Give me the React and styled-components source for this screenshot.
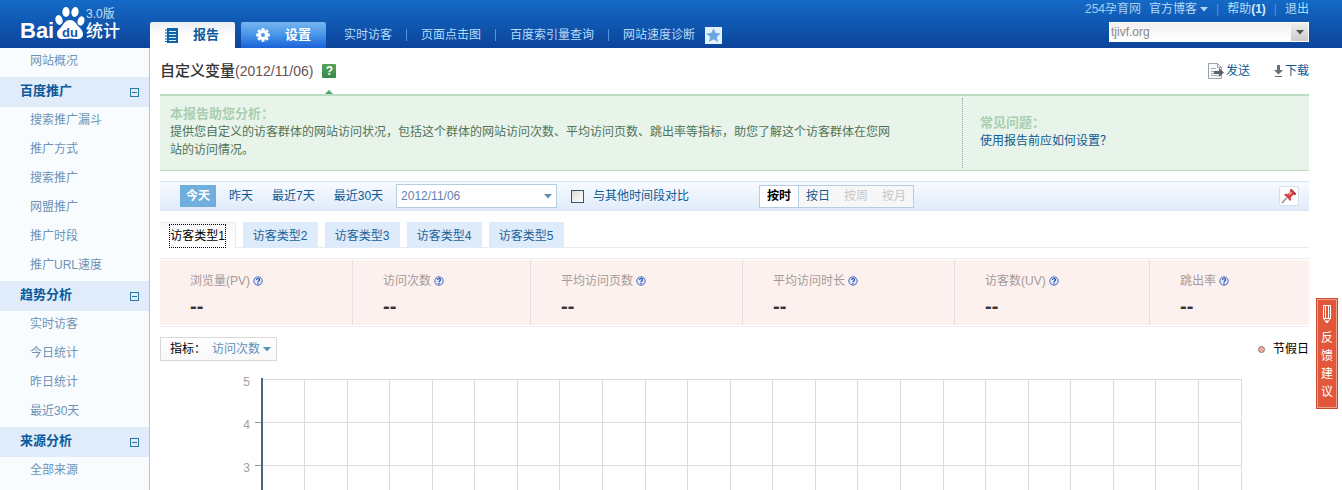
import { useState } from 'react';
import styled, { createGlobalStyle } from 'styled-components';

const menu = [
  {
    title: '百度推广',
    items: ['搜索推广漏斗', '推广方式', '搜索推广', '网盟推广', '推广时段', '推广URL速度'],
  },
  { title: '趋势分析', items: ['实时访客', '今日统计', '昨日统计', '最近30天'] },
  { title: '来源分析', items: ['全部来源'] },
];

const quickLinks = ['实时访客', '页面点击图', '百度索引量查询', '网站速度诊断'];
const ranges = ['今天', '昨天', '最近7天', '最近30天'];
const visitorTypes = ['访客类型1', '访客类型2', '访客类型3', '访客类型4', '访客类型5'];

const units = [
  { label: '按时' },
  { label: '按日' },
  { label: '按周', disabled: true },
  { label: '按月', disabled: true },
];

const metrics = [
  { label: '浏览量(PV)', size: 193 },
  { label: '访问次数', size: 178 },
  { label: '平均访问页数', size: 212 },
  { label: '平均访问时长', size: 212 },
  { label: '访客数(UV)', size: 195 },
  { label: '跳出率', size: 159 },
];

const metricsTotal = metrics.reduce((sum, { size }) => sum + size, 0);

const HOURS = 23;
const ROW_HEIGHT = 43;
const chartLabels = [5, 4, 3, 2, 1, 0];

function Logo() {
  return (
    <svg width="108" height="44" overflow="visible" role="img" aria-label="百度统计 3.0版">
      <g fill="#fff">
        <text x="4" y="38" fontSize="22" fontWeight="bold">
          Bai
        </text>
        <ellipse cx="43" cy="20" rx="3.6" ry="5" transform="rotate(-14 43 20)" />
        <ellipse cx="50" cy="12" rx="3.6" ry="5" />
        <ellipse cx="59" cy="12" rx="3.6" ry="5" transform="rotate(8 59 12)" />
        <ellipse cx="65" cy="21" rx="3.4" ry="4.8" transform="rotate(18 65 21)" />
        <path d="M54 20c4 0 6 3 8 6 3 3 5 5 5 8 0 4-3 5-6 5-3 0-5-.6-7-.6s-4 .6-7 .6c-4 0-6-2-6-5 0-4 3-5 5-8 2-3 4-6 8-6z" />
        <text x="70" y="18" fontSize="12" fillOpacity="0.8">
          3.0版
        </text>
        <text x="70" y="37" fontSize="17" fontWeight="500">
          统计
        </text>
      </g>
      <text x="46" y="37" fontSize="13" fontWeight="bold" fill="#1055ab">
        du
      </text>
    </svg>
  );
}

function ReportIcon() {
  return (
    <svg width="13" height="15" aria-hidden="true">
      <rect x="2" y="0" width="11" height="15" fill="#0d62a8" />
      <path d="M0 2h3M0 5h3M0 8h3M0 11h3M0 13.500h3" stroke="#0d62a8" />
      <path d="M4 3.500h7M4 6.500h7M4 9.500h7M4 12.500h7" stroke="#d9ecfa" />
    </svg>
  );
}

function GearIcon() {
  return (
    <svg width="14" height="14" viewBox="-7 -7 14 14" aria-hidden="true">
      <g fill="#fff">
        {[0, 45, 90, 135].map((angle) => (
          <rect key={angle} x="-1.500" y="-6.800" width="3" height="13.600" transform={`rotate(${angle})`} />
        ))}
      </g>
      <circle r="3.600" fill="none" stroke="#fff" strokeWidth="2.800" />
      <circle r="2" fill="#4a97ea" />
    </svg>
  );
}

function StarIcon() {
  return (
    <svg width="17" height="17" aria-hidden="true">
      <rect width="17" height="17" fill="#e2f0fc" />
      <path d="M8.500 1.500l2.100 4.600 5 .5-3.800 3.300 1.200 5-4.500-2.700-4.500 2.700 1.200-5L1.400 6.600l5-.5z" fill="#6ba6e0" />
    </svg>
  );
}

function Caret({ color }) {
  return (
    <svg width="8" height="5" aria-hidden="true">
      <path d="M0 0h8L4 4.500z" fill={color} />
    </svg>
  );
}

function SendIcon() {
  return (
    <svg width="16" height="16" aria-hidden="true">
      <path d="M.5.500h9l4 4v11H.5z" fill="#f7f8f9" stroke="#9aa3aa" />
      <path d="M9.500.500v4h4" fill="none" stroke="#9aa3aa" />
      <path d="M3 5.500h5M3 12.500h8" stroke="#a9b1b7" />
      <path d="M3 8.500h4M3 10.500h4" stroke="#a9b1b7" />
      <path d="M6 8h5V5l5 4.500-5 4.500v-3H6z" fill="#5a6268" />
    </svg>
  );
}

function DownloadIcon() {
  return (
    <svg width="9" height="12" aria-hidden="true">
      <path d="M3 0h3v5h3L4.500 9.500 0 5h3z" fill="#66717a" />
      <path d="M1 11.500h7" stroke="#66717a" />
    </svg>
  );
}

function PinIcon() {
  return (
    <svg width="16" height="16" aria-hidden="true">
      <path d="M5.500 10L1 15" stroke="#8a9298" strokeWidth="1.500" />
      <path d="M3 6.500c1-1 2.500-1 3.500-.5l2.500-2c-.5-1 0-2 .8-2.800l5 5c-.8.800-1.800 1.200-2.800.8l-2.200 2.400c.5 1.200.4 2.600-.6 3.600z" fill="#d9454f" />
      <path d="M8 6.500l2.500-2.300" stroke="#f6a9ae" strokeWidth="1.500" />
      <path d="M9.800 1.200l5 5" stroke="#b02a38" strokeWidth="1.500" />
    </svg>
  );
}

function PencilIcon() {
  return (
    <svg width="8" height="19" fill="none" stroke="#fff" aria-hidden="true">
      <path d="M.5.500h7v13L4 18 .5 13.500zM.5 13.500h7M2.500.500v13M5.500.500v13" />
      <path d="M3 16h2l-1 2z" fill="#fff" />
    </svg>
  );
}

function HintIcon() {
  return (
    <svg width="10" height="10" aria-hidden="true">
      <circle cx="5" cy="5" r="4.200" fill="#dfe9fb" stroke="#4a68bd" />
      <path d="M3.500 4c0-2 3-2 3-.2C6.500 5 5 4.800 5 6.200M5 7v1.200" fill="none" stroke="#2d4aa5" strokeWidth="1.200" />
    </svg>
  );
}

function Chart() {
  return (
    <ChartArea>
      <ChartAxis>
        {chartLabels.map((label) => (
          <li key={label}>{label}</li>
        ))}
      </ChartAxis>
      <Plot aria-label="访问次数趋势">
        <svg x="8" y="5" width="100%" height="230" overflow="visible">
          {chartLabels.map((label, i) => (
            <g key={label}>
              <rect y={1 + i * ROW_HEIGHT} width="100%" height="1" fill="#dcdcdc" />
              {i > 0 && <rect x="-7" y={1 + i * ROW_HEIGHT} width="7" height="1" fill="#8a9ba6" />}
            </g>
          ))}
          {Array.from({ length: HOURS }, (_, i) => (
            <line
              key={i}
              x1={`${((i + 1) / HOURS) * 100}%`}
              x2={`${((i + 1) / HOURS) * 100}%`}
              y1="1"
              y2="216"
              stroke="#dcdcdc"
              shapeRendering="crispEdges"
            />
          ))}
          <rect x="-1" width="2" height="216" fill="#466a7d" />
        </svg>
      </Plot>
    </ChartArea>
  );
}

export default function App() {
  const [range, setRange] = useState('今天');
  const [unit, setUnit] = useState('按时');
  const [visitorType, setVisitorType] = useState('访客类型1');

  return (
    <Page>
      <GlobalStyle />
      <Header>
        <Brand href="#">
          <Logo />
        </Brand>
        <MainTabs>
          <MainTab href="#" $active>
            <ReportIcon />
            报告
          </MainTab>
          <MainTab href="#">
            <GearIcon />
            设置
          </MainTab>
        </MainTabs>
        <QuickNav>
          {quickLinks.map((link) => (
            <QuickLink href="#" key={link}>
              {link}
            </QuickLink>
          ))}
          <StarButton aria-label="收藏">
            <StarIcon />
          </StarButton>
        </QuickNav>
        <Account>
          <AccountLinks>
            <span>254孕育网</span>
            <a href="#">
              官方博客 <Caret color="#b5d5f5" />
            </a>
            <i>|</i>
            <a href="#">
              帮助<b>(1)</b>
            </a>
            <i>|</i>
            <a href="#">退出</a>
          </AccountLinks>
          <SiteSelect>
            <select aria-label="网站">
              <option>tjivf.org</option>
            </select>
            <span>
              <Caret color="#555" />
            </span>
          </SiteSelect>
        </Account>
      </Header>

      <Body>
        <Sidebar>
          <SideLink href="#">网站概况</SideLink>
          {menu.map((group) => (
            <div key={group.title}>
              <SideTitle>
                {group.title}
                <Collapse aria-label="收起" />
              </SideTitle>
              {group.items.map((item) => (
                <SideLink href="#" key={item}>
                  {item}
                </SideLink>
              ))}
            </div>
          ))}
        </Sidebar>

        <Main>
          <TitleRow>
            <h1>
              自定义变量<span>(2012/11/06)</span>
            </h1>
            <HelpButton aria-label="帮助">?</HelpButton>
            <Actions>
              <a href="#">
                <SendIcon />
                发送
              </a>
              <a href="#">
                <DownloadIcon />
                下载
              </a>
            </Actions>
          </TitleRow>

          <HelpPanel>
            <HelpText>
              <h2>本报告助您分析：</h2>
              <p>
                提供您自定义的访客群体的网站访问状况，包括这个群体的网站访问次数、平均访问页数、跳出率等指标，助您了解这个访客群体在您网站的访问情况。
              </p>
            </HelpText>
            <Faq>
              <h2>常见问题：</h2>
              <a href="#">使用报告前应如何设置？</a>
            </Faq>
          </HelpPanel>

          <Toolbar>
            <Ranges>
              {ranges.map((item) => (
                <RangeButton key={item} $active={item === range} onClick={() => setRange(item)}>
                  {item}
                </RangeButton>
              ))}
            </Ranges>
            <DateSelect>
              <select aria-label="日期">
                <option>2012/11/06</option>
              </select>
              <span>
                <Caret color="#5b8fbd" />
              </span>
            </DateSelect>
            <Compare>
              <input type="checkbox" />
              与其他时间段对比
            </Compare>
            <Units>
              {units.map(({ label, disabled }) => (
                <UnitButton
                  key={label}
                  disabled={disabled}
                  $active={label === unit}
                  onClick={() => setUnit(label)}
                >
                  {label}
                </UnitButton>
              ))}
            </Units>
            <PinButton aria-label="固定">
              <PinIcon />
            </PinButton>
          </Toolbar>

          <TypeTabs>
            {visitorTypes.map((type) => (
              <TypeTab key={type} $active={type === visitorType} onClick={() => setVisitorType(type)}>
                <span>{type}</span>
              </TypeTab>
            ))}
          </TypeTabs>

          <Metrics>
            {metrics.map(({ label, size }) => (
              <Metric key={label} $share={size / metricsTotal}>
                <dt>
                  {label}
                  <HintIcon />
                </dt>
                <dd>--</dd>
              </Metric>
            ))}
          </Metrics>

          <ChartHeader>
            <IndexButton>
              指标：
              <span>访问次数</span>
              <Caret color="#5b8fbd" />
            </IndexButton>
            <Legend>
              <i />
              节假日
            </Legend>
          </ChartHeader>

          <Chart />
        </Main>
      </Body>

      <Feedback>
        <PencilIcon />
        <span>反馈建议</span>
      </Feedback>
    </Page>
  );
}

const GlobalStyle = createGlobalStyle`
  * {
    box-sizing: border-box;
  }

  body {
    margin: 0;
    background: #fff;
  }

  body, button, select, input {
    font-family: "Liberation Sans", "Noto Sans CJK SC", sans-serif;
    font-size: 12px;
    line-height: 18px;
  }

  button {
    padding: 0;
    border: 0;
    background: none;
    cursor: pointer;
  }

  a {
    color: #0d5a94;
    text-decoration: none;
  }

  h1, h2, p, dl, dd, ul {
    margin: 0;
    padding: 0;
  }

  svg {
    display: block;
    flex: none;
  }
`;

const Page = styled.div`
  display: flex;
  flex-direction: column;
  height: 100vh;
  overflow: hidden;
`;

const Header = styled.header`
  display: flex;
  flex: none;
  height: 48px;
  padding-right: 33px;
  background: linear-gradient(#136ac6, #0c449a);
`;

const Brand = styled.a`
  width: 150px;
  padding-left: 16px;
`;

const MainTabs = styled.nav`
  display: flex;
  align-items: flex-end;
  gap: 6px;
`;

const MainTab = styled.a`
  display: flex;
  align-items: center;
  gap: 15px;
  width: 85px;
  height: 26px;
  padding-left: 15px;
  border-radius: 2px 2px 0 0;
  background: ${({ $active }) =>
    $active ? 'linear-gradient(#e9eff4, #fff 60%)' : 'linear-gradient(#77b5f0, #4695e8 50%, #1a62d8)'};
  color: ${({ $active }) => ($active ? '#0d5a9b' : '#fff')};
  font-size: 13px;
  font-weight: bold;
`;

const QuickNav = styled.nav`
  display: flex;
  align-items: center;
  padding: 22px 0 0 4px;
`;

const QuickLink = styled.a`
  padding: 0 14px;
  color: #b5dcfb;
  line-height: 12px;

  & + & {
    border-left: 1px solid #4f94dc;
  }
`;

const StarButton = styled.button`
  margin-left: -4px;
`;

const Account = styled.div`
  width: 226px;
  margin-left: auto;
`;

const AccountLinks = styled.div`
  display: flex;
  justify-content: flex-end;
  align-items: center;
  gap: 8px;
  height: 18px;
  color: #a9cdf2;
  white-space: nowrap;

  a {
    display: flex;
    align-items: center;
    gap: 3px;
    color: #b5dcfb;
  }

  b {
    margin-left: -3px;
    color: #d8ebfc;
  }

  i {
    color: #4f94dc;
    font-style: normal;
  }
`;

const SelectBox = styled.div`
  position: relative;

  select {
    width: 100%;
    height: 100%;
    border: 0;
    background: none;
    appearance: none;
  }

  span {
    position: absolute;
    top: 0;
    right: 0;
    display: flex;
    justify-content: center;
    align-items: center;
    width: 17px;
    height: 100%;
    pointer-events: none;
  }
`;

const SiteSelect = styled(SelectBox)`
  width: 200px;
  height: 20px;
  margin: 4px 0 0 auto;
  border: 1px solid #fff;
  background: linear-gradient(#f1f1f1, #fff);

  select {
    padding: 0 1px;
    color: #888;
  }

  span {
    background: linear-gradient(#eee, #ccc);
  }
`;

const Body = styled.div`
  display: flex;
  flex: 1;
  min-height: 0;
`;

const Sidebar = styled.nav`
  flex: none;
  width: 150px;
  overflow-y: auto;
  border-right: 1px solid #a9c9e2;
  background: #f8fcff;
  scrollbar-width: none;
`;

const SideLink = styled.a`
  display: block;
  height: 29px;
  padding-left: 30px;
  color: #6d93b5;
  line-height: 26px;
`;

const SideTitle = styled.h2`
  display: flex;
  justify-content: space-between;
  align-items: center;
  height: 30px;
  padding: 0 10px 2px 20px;
  background: #e0ecf9;
  color: #0d5a9b;
  font-size: 13px;
`;

const Collapse = styled.button`
  display: flex;
  align-items: center;
  width: 9px;
  height: 9px;
  margin-top: 3px;
  border: 1px solid #2b78a8;

  &::before {
    content: '';
    flex: 1;
    height: 1px;
    margin: 0 1px;
    background: #2b78a8;
  }
`;

const Main = styled.main`
  flex: 1;
  min-width: 0;
  padding: 0 33px 0 10px;
  overflow-y: auto;
  scrollbar-width: none;
`;

const TitleRow = styled.div`
  display: flex;
  align-items: center;
  height: 46px;

  h1 {
    color: #333;
    font-size: 15px;
    font-weight: 500;
  }

  h1 span {
    color: #6b5050;
    font-size: 14px;
    font-weight: normal;
  }
`;

const HelpButton = styled.button`
  position: relative;
  width: 14px;
  height: 14px;
  margin-left: 9px;
  border-radius: 1px;
  background: linear-gradient(#58a35c, #3a8a4c);
  color: #fff;
  font-weight: bold;
  line-height: 14px;

  /* pointer that ties the button to the panel below */
  &::after {
    content: '';
    position: absolute;
    top: 26px;
    left: 3px;
    border: 4px solid transparent;
    border-top: 0;
    border-bottom-color: #4ea36a;
  }
`;

const Actions = styled.div`
  display: flex;
  gap: 24px;
  margin-left: auto;

  a {
    display: flex;
    align-items: center;
    gap: 2px;
  }
`;

const HelpPanel = styled.section`
  display: flex;
  height: 77px;
  border-top: 2px solid #bcdcc4;
  border-bottom: 1px solid #bcdcc4;
  background: #e8f4ea;

  h2 {
    color: #a8ceb0;
    font-size: 13px;
  }
`;

const HelpText = styled.div`
  flex: 1;
  padding: 9px 10px;
  color: #4f7359;

  p {
    max-width: 726px;
  }
`;

const Faq = styled.div`
  width: 347px;
  margin: 2px 0;
  padding: 16px 17px;
  border-left: 1px dotted #98a8a8;
`;

const Toolbar = styled.div`
  display: flex;
  align-items: center;
  height: 30px;
  margin-top: 10px;
  padding: 0 10px 0 20px;
  border: solid #d8e8f3;
  border-width: 1px 0;
  background: linear-gradient(#f8fbff, #e0ebfa);
`;

const Ranges = styled.div`
  display: flex;
  gap: 7px;
`;

const RangeButton = styled.button`
  height: 22px;
  padding: 0 6px;
  background: ${({ $active }) => ($active ? '#70aedd' : 'none')};
  color: ${({ $active }) => ($active ? '#fff' : '#0d5a94')};
  font-weight: ${({ $active }) => ($active ? 'bold' : 'normal')};
`;

const DateSelect = styled(SelectBox)`
  width: 161px;
  height: 24px;
  margin-left: 7px;
  border: 1px solid #b4cee0;
  background: #fff;

  select {
    padding: 0 4px;
    color: #5f82b0;
  }
`;

const Compare = styled.label`
  display: flex;
  align-items: center;
  gap: 9px;
  margin-left: 14px;
  color: #0d5a94;

  input {
    width: 13px;
    height: 13px;
    margin: 0;
    border: 1px solid #35566b;
    background: linear-gradient(135deg, #dcdcd4, #fff);
    appearance: none;
  }

  input:checked {
    background: #35566b;
  }
`;

const Units = styled.div`
  display: flex;
  height: 23px;
  margin-left: 70px;
  border: 1px solid #b6cde4;
  background: #f7f7f7;
`;

const UnitButton = styled.button`
  width: 38px;
  background: ${({ $active }) => ($active ? '#fff' : 'none')};
  color: ${({ $active }) => ($active ? '#000' : '#0d5a94')};
  font-weight: ${({ $active }) => ($active ? 'bold' : 'normal')};

  &:first-child {
    width: 39px;
    border-right: 1px solid #b6cde4;
  }

  &:disabled {
    color: #c8c8c8;
  }
`;

const PinButton = styled.button`
  display: flex;
  justify-content: center;
  align-items: center;
  width: 20px;
  height: 20px;
  margin-left: auto;
  border: 1px solid #d2e0ec;
  border-radius: 2px;
  background: #fff;
`;

const TypeTabs = styled.div`
  display: flex;
  gap: 7px;
  height: 26px;
  margin-top: 11px;
  background: linear-gradient(#e3ecf3, #e3ecf3) bottom / 100% 1px no-repeat;
`;

const TypeTab = styled.button`
  width: ${({ $active }) => ($active ? 76 : 75)}px;
  border: solid ${({ $active }) => ($active ? '#e3ecf3' : '#deebfa')};
  border-width: 1px 1px 0 0;
  background: ${({ $active }) => ($active ? 'linear-gradient(#f7f7f7, #fff 60%)' : '#deebfa')};
  color: ${({ $active }) => ($active ? '#000' : '#1c6299')};

  span {
    display: inline-block;
    height: 24px;
    border: 1px dotted ${({ $active }) => ($active ? '#000' : 'transparent')};
    line-height: 22px;
  }
`;

const Metrics = styled.dl`
  display: flex;
  height: 69px;
  margin-top: 10px;
  padding: 1px 0;
  border: solid #ededed;
  border-width: 1px 0;
  background: #fdf1ef content-box;
`;

const Metric = styled.div`
  width: ${({ $share }) => $share * 100}%;
  padding: 12px 0 0 30px;
  border-right: 1px solid #e8dede;

  &:last-child {
    border-right: 0;
  }

  dt {
    display: flex;
    align-items: center;
    gap: 3px;
    color: #a39a98;
    white-space: nowrap;
  }

  dd {
    margin-top: 7px;
    color: #333;
    font-size: 20px;
    font-weight: bold;
  }
`;

const ChartHeader = styled.div`
  display: flex;
  justify-content: space-between;
  align-items: center;
  margin-top: 10px;
`;

const IndexButton = styled.button`
  display: flex;
  align-items: center;
  gap: 3px;
  height: 24px;
  padding: 0 5px 0 9px;
  border: 1px solid #d8d8d8;
  background: linear-gradient(#fff, #f8f8f8);
  color: #000;

  span {
    margin-left: 3px;
    color: #6090bb;
  }
`;

const Legend = styled.div`
  display: flex;
  align-items: center;
  gap: 8px;

  i {
    width: 7px;
    height: 7px;
    border: 1px solid #8a7a70;
    border-radius: 50%;
    background: #f0aaa5;
  }
`;

const ChartArea = styled.div`
  display: flex;
  margin-top: 12px;
  padding-right: 68px;
`;

const ChartAxis = styled.ul`
  width: 94px;
  color: #a0a0a0;
  list-style: none;
  text-align: right;

  li {
    height: 43px;
    padding-right: 4px;
  }
`;

const Plot = styled.svg`
  flex: 1;
  width: 0;
  height: 240px;
  margin-right: 8px;
  overflow: visible;
`;

const Feedback = styled.button`
  position: fixed;
  top: 298px;
  right: 4px;
  display: flex;
  flex-direction: column;
  align-items: center;
  gap: 5px;
  width: 22px;
  height: 111px;
  padding-top: 6px;
  border: 1px solid #c9472c;
  outline: 1px solid #f0a28f;
  outline-offset: -2px;
  background: #e2573a;
  color: #fff;

  span {
    width: 12px;
  }
`;
